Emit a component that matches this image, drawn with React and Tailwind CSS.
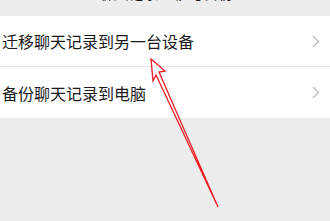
const rows = ["迁移聊天记录到另一台设备", "备份聊天记录到电脑"];

const Chevron = () => (
  <svg width="8" height="13" viewBox="0 0 8 13" className="shrink-0">
    <polyline points="1,1 6.5,6.5 1,12" fill="none" stroke="#bdbdbd" strokeWidth="1.4" />
  </svg>
);

export default function App() {
  return (
    <div
      className="relative h-[221px] w-[330px] overflow-hidden bg-[#ededed]"
      style={{ fontFamily: '"Noto Sans CJK SC", "Noto Sans", sans-serif' }}
    >
      {/* header, mostly scrolled away */}
      <div className="h-[16px] overflow-hidden">
        <div className="relative mt-[-15px] flex h-[16px] items-center">
          <span className="absolute left-[-4px] text-[16px] leading-[16px] text-[#191919]">←</span>
          <span className="w-full pl-[2px] text-center text-[15px] leading-[16px] text-[#191919]">聊天记录迁移与备份</span>
        </div>
      </div>

      <div className="bg-white">
        {rows.map((label, i) => (
          <div
            key={label}
            className={`flex h-[51px] items-center justify-between pl-[2px] pr-[10px] ${
              i === 0 ? "border-b border-[#e6e6e6]" : ""
            }`}
          >
            <span className="text-[16px] leading-none text-[#1a1a1a]">{label}</span>
            <Chevron />
          </div>
        ))}
      </div>

      <svg className="absolute left-0 top-0" width="330" height="221" viewBox="0 0 330 221">
        <polygon
          points="151,59 165,71 159,72 218,207 156,75 153,81"
          fill="none"
          stroke="#ec1c24"
          strokeWidth="1.3"
          strokeLinejoin="miter"
        />
      </svg>
    </div>
  );
}
